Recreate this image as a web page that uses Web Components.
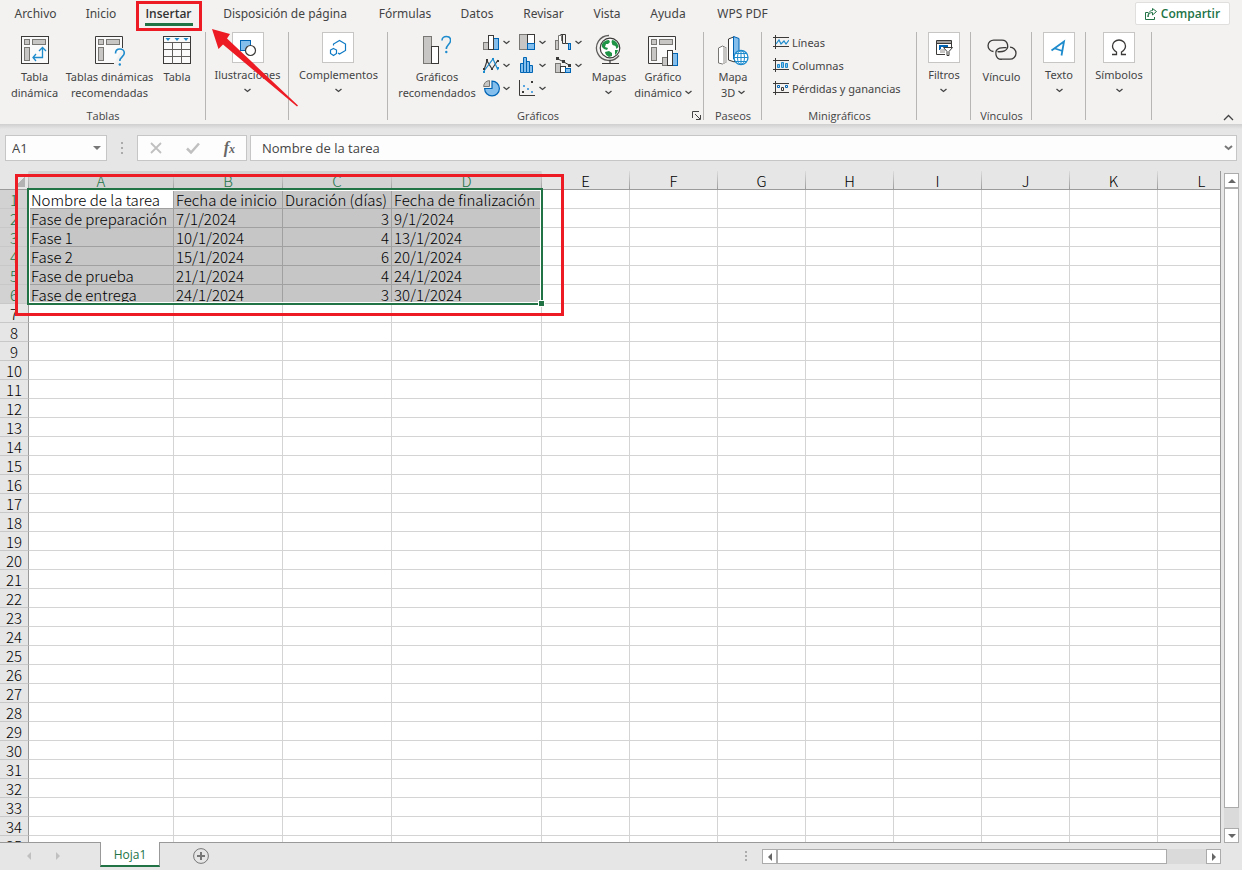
<!DOCTYPE html>
<html lang="es">
<head>
<meta charset="utf-8">
<title>Hoja de cálculo</title>
<style>
  html, body { margin: 0; height: 100%; }
  body { font-family: "Open Sans", "Noto Sans", sans-serif; font-size: 12px; color: #444; background: #e6e6e6; overflow: hidden; }
</style>
</head>
<body>
<spread-app></spread-app>

<script>
const define = (name, html, setup) => customElements.define(name, class extends HTMLElement {
  connectedCallback() {
    if (this.shadowRoot) return;
    const root = this.attachShadow({ mode: 'open' });
    root.innerHTML = typeof html === 'function' ? html(this) : html;
    if (setup) setup(this, root);
  }
});

const G = '#217346';
const bars = 'fill="#c8c6c4" stroke="#797774"';
const icons = {
  pivot: `<svg width="28" height="28" viewBox="0 0 28 28" fill="none"><rect x=".5" y=".5" width="27" height="27" fill="#fafafa" stroke="#3b3a39"/><g ${bars}><rect x="3.5" y="3.5" width="5" height="5"/><rect x="11.5" y="3.5" width="13" height="5"/><rect x="3.5" y="11.5" width="5" height="13"/></g><path d="M12 21.500h9.500V12M15 18l-3 3.500 3 3.500M18 15l3.500-3.500L25 15" stroke="#1e8bcd" stroke-width="1.300"/></svg>`,
  pivotRec: `<svg width="32" height="32" viewBox="-1 -2 32 32" fill="none"><path d="M27.500 12V.5H.5v27H19" fill="#fafafa" stroke="#3b3a39"/><g ${bars}><rect x="3.500" y="3.500" width="5" height="5"/><rect x="11.500" y="3.500" width="13" height="5"/><rect x="3.500" y="11.500" width="5" height="13"/></g><path d="M20.500 17.500c0-3 2-4.500 4.300-4.500 2.500 0 4.500 1.600 4.500 4 0 3.800-4.500 4-4.500 8" stroke="#1e8bcd" stroke-width="1.600"/><circle cx="24.800" cy="28.500" r="1.200" fill="#1e8bcd"/></svg>`,
  table: `<svg width="28" height="28" viewBox="0 0 28 28" fill="none"><rect x=".5" y=".5" width="27" height="27" fill="#fafafa" stroke="#3b3a39"/><path d="M1 6.500h26M1 13.500h26M1 20.500h26M9.500 6v22M18.500 6v22" stroke="#605e5c"/><path d="M2.500 2h5L5 5zM11.500 2h5L14 5zM20.500 2h5L23 5z" fill="#1e8bcd"/></svg>`,
  shapes: `<svg width="18" height="18" viewBox="0 0 18 18"><rect x="1.500" y="1.500" width="10" height="10" fill="#83beec" stroke="#0064b5"/><circle cx="11.500" cy="11.500" r="5" fill="#fff" stroke="#3b3a39" stroke-width="1.200"/></svg>`,
  addins: `<svg width="18" height="18" viewBox="0 0 18 18" fill="none" stroke="#0f7ac4" stroke-width="1.200"><path d="M4.500 6.500V5L10.500 1.500l6 3.500v6.500l-6 3.500-1.500-1"/><path d="M4.500 9.500l3 1.500v3.500l-3 2-3-2V11z"/></svg>`,
  chartRec: `<svg width="28" height="32" viewBox="0 0 28 32" fill="none"><rect x=".5" y="2.500" width="8" height="27" ${bars}/><rect x="8.500" y="12.500" width="7" height="17" fill="#fff" stroke="#3b3a39"/><path d="M19 6.500C19 4 21 2.500 23.300 2.500c2.600 0 4.300 1.600 4.300 4 0 3.700-4.300 4.500-4.300 8.500" stroke="#1e8bcd" stroke-width="1.600"/><circle cx="23.300" cy="18" r="1.200" fill="#1e8bcd"/></svg>`,
  column: `<svg width="17" height="17" viewBox="0 0 17 17"><rect x=".5" y="8.500" width="5" height="7" ${bars}/><rect x="10.500" y="4.500" width="5" height="11" fill="#83beec" stroke="#0064b5"/><rect x="5.500" y="1.500" width="5" height="14" fill="#fff" stroke="#3b3a39"/></svg>`,
  line: `<svg width="17" height="17" viewBox="0 0 17 17" fill="none"><path d="M1 13l3-9 5 8 6-9" stroke="#3b3a39" stroke-width="1.200"/><path d="M1 14l9-12 5 11" stroke="#1e8bcd" stroke-width="1.200"/><path d="M3 2h2v3H3zM0 11h2v2H0zM8 11h2v2H8zM14 3h2v2h-2z" fill="#3b3a39"/><path d="M9 1h2v2H9zM14 10h2v2h-2zM0 14h2v2H0z" fill="#1e8bcd"/></svg>`,
  pie: `<svg width="17" height="17" viewBox="0 0 17 17"><path d="M9 8.500H1.600a7.400 7.400 0 1 0 7.400-7.400z" fill="#83beec" stroke="#0064b5" stroke-width="1.200"/><path d="M7.500 7.500H0V0h7.500z" fill="#f3f2f1"/><path d="M6.500 6.500V.600A6.500 6.500 0 0 0 .600 6.500z" ${bars}/></svg>`,
  tree: `<svg width="17" height="17" viewBox="0 0 17 17"><rect x=".5" y=".5" width="8" height="15" ${bars}/><rect x="8.500" y=".5" width="7" height="9" fill="#fff" stroke="#3b3a39"/><rect x="8.500" y="9.500" width="7" height="6" fill="#83beec" stroke="#0064b5"/></svg>`,
  hist: `<svg width="17" height="17" viewBox="0 0 17 17" fill="#83beec" stroke="#0064b5"><path d="M1.500 6.500h3v9h-3zM4.500 .5h3v15h-3zM7.500 4.500h3v11h-3zM10.500 8.500h3v7h-3z"/></svg>`,
  scatter: `<svg width="17" height="17" viewBox="0 0 17 17"><path d="M.5 0v15.500H16" fill="none" stroke="#3b3a39"/><path d="M12 1h2v2h-2zM3 11h2v2H3z" fill="#3b3a39"/><path d="M4 5h2v2H4zM8 8h2v2H8zM12 11h2v2h-2z" fill="#5aa7e0"/></svg>`,
  waterfall: `<svg width="17" height="17" viewBox="0 0 17 17" fill="none"><rect x=".5" y="6.500" width="3" height="9" fill="#c8c6c4" stroke="#797774"/><path d="M3.500 7V1.500h3V7" fill="#fff" stroke="#797774"/><path d="M5.500 .5h5v9h-3v-9M10.500 9.500h3" stroke="#3b3a39"/><rect x="13.500" y="9.500" width="2" height="6" fill="#83beec" stroke="#0064b5"/></svg>`,
  combo: `<svg width="17" height="17" viewBox="0 0 17 17" fill="none"><rect x=".5" y="6.500" width="5" height="9" ${bars}/><rect x="5.500" y="9.500" width="5" height="6" fill="#fff" stroke="#3b3a39"/><rect x="10.500" y="11.500" width="5" height="4" fill="#83beec" stroke="#0064b5"/><path d="M2 1.500l6 3 7 4" stroke="#3b3a39"/><path d="M1 0h3v3H1zM7 3h3v3H7zM13 7h3v3h-3z" fill="#3b3a39"/></svg>`,
  globe: `<svg width="28" height="32" viewBox="0 0 28 32" fill="none"><circle cx="15" cy="14" r="9.800" fill="#fff" stroke="#3b3a39" stroke-width="1.200"/><path d="M7 10c2-3 4-4 7-4l1 2-2 2-2 0-1 3 3 1-1 2-3-1-2-2zM17 6c3 0 6 3 6.500 7l-2 2-1-3-3-1-1-3zM10 18l4-1 3 2 0 3-3 1c-2-1-4-3-4-5zM20 16l3 0c-.5 2-1.500 4-3 5z" fill="#1f9346"/><path d="M14 1.500a12.500 12.500 0 1 0 10 20" stroke="#605e5c" stroke-width="1.300"/><path d="M15 26v3M7 29.500h17" stroke="#3b3a39" stroke-width="1.200"/></svg>`,
  pivotChart: `<svg width="32" height="32" viewBox="-1 -2 32 32" fill="none"><path d="M27.500 14V.5H.5v27H14" fill="#fafafa" stroke="#3b3a39"/><g ${bars}><rect x="3.500" y="3.500" width="5" height="5"/><rect x="11.500" y="3.500" width="13" height="5"/><rect x="3.500" y="11.500" width="5" height="13"/><rect x="14.500" y="21.500" width="5" height="8"/></g><rect x="24.500" y="17.500" width="5" height="12" fill="#83beec" stroke="#0064b5"/><rect x="19.500" y="14.500" width="5" height="15" fill="#fff" stroke="#3b3a39"/></svg>`,
  map3d: `<svg width="32" height="32" viewBox="0 0 32 32" fill="none"><path d="M1.500 14l4-2 4 2v14l-4 2-4-1z" fill="#fff" stroke="#797774"/><path d="M6 13l4 1v14l-4 2z" fill="#c8c6c4"/><path d="M11.500 5l5-2h1v25l-6-2z" fill="#fff" stroke="#3b3a39"/><path d="M16.500 2.500l5.500 2V20l-5.500 5z" fill="#83beec" stroke="#0064b5"/><circle cx="24" cy="23.500" r="7" fill="#fff" stroke="#1e8bcd" stroke-width="1.300"/><path d="M24 16.500v14M17 23.500h14M18.500 19.500h11M18.500 27.500h11" stroke="#1e8bcd"/><ellipse cx="24" cy="23.500" rx="3.500" ry="7" stroke="#1e8bcd"/></svg>`,
  spLine: `<svg width="16" height="15" viewBox="0 0 16 15" fill="none"><path d="M0 2.500h16M0 11.500h16M2.500 0v14" stroke="#3b3a39"/><path d="M3 9l3-4 2 4 3-3 2 3 3-4" stroke="#1e8bcd" stroke-width="1.200"/></svg>`,
  spCol: `<svg width="16" height="15" viewBox="0 0 16 15" fill="none"><path d="M0 2.500h16M0 11.500h16M2.500 0v14" stroke="#3b3a39"/><path d="M4.500 6.500h2v3h-2zM8.500 4.500h2v5h-2zM12.500 5.500h2v4h-2z" fill="#83beec" stroke="#1e8bcd"/></svg>`,
  spWin: `<svg width="16" height="15" viewBox="0 0 16 15" fill="none"><path d="M0 2.500h16M0 11.500h16M2.500 0v14" stroke="#3b3a39"/><path d="M4.500 4.500h2v2h-2zM12.500 4.500h2v2h-2z" stroke="#0064b5"/><path d="M8.500 6.500h2v3h-2z" stroke="#3b3a39"/></svg>`,
  filter: `<svg width="18" height="18" viewBox="0 0 18 18" fill="none"><path d="M16.500 8V1.500h-15v14H10" stroke="#3b3a39"/><path d="M2 2h14v2H2z" fill="#a19f9d"/><path d="M1 4.500h16" stroke="#3b3a39"/><path d="M13 7H5v4" stroke="#0064b5" stroke-width="2"/><path d="M5 10h5v4H5z" fill="#c8c6c4"/><path d="M8.500 8.500h9l-3.500 4v4h-2v-4z" fill="#fff" stroke="#3b3a39"/></svg>`,
  link: `<svg width="30" height="32" viewBox="0 0 30 32" fill="none" stroke="#3b3a39" stroke-width="1.300"><path d="M6.500 17.500a5.700 5.700 0 0 1 .5-11.400h8a5.700 5.700 0 0 1 2.500 10.800c-2.500 1.200-5 .8-7 .8"/><path d="M23 13.200a5.700 5.700 0 0 1 0 12h-8a5.700 5.700 0 0 1-2.500-11c2.500-1 5-.6 7-.6"/></svg>`,
  text: `<svg width="18" height="18" viewBox="0 0 18 18" fill="none" stroke="#1e8bcd" stroke-width="1.800"><path d="M1.500 11.500L14 2.500l-2.500 14M5 9.500l7.500 2.500"/></svg>`,
  omega: `<svg width="18" height="18" viewBox="0 0 18 18" fill="none" stroke="#3b3a39" stroke-width="1.300"><path d="M2 15.500h4.500V13C4 11.500 2.500 9.500 2.500 7a6.500 6 0 0 1 13 0c0 2.500-1.500 4.500-4 6v2.500H16"/></svg>`,
};

define('ui-icon', el => `<style>:host{display:inline-flex;flex:none}svg{display:block}</style>${icons[el.getAttribute('name')]}`);

define('ui-chevron', `<style>:host{display:inline-block;line-height:0;vertical-align:2px}svg{display:block}</style>
<svg width="7" height="5" viewBox="0 0 7 5" fill="none" stroke="#444" stroke-width="1.300"><path d="M.5 1l3 2.500 3-2.500"/></svg>`);

/* Large ribbon button: icon above a one or two line label */
define('ribbon-button', el => `<style>
  :host{display:block;flex:none;box-sizing:border-box}
  button{all:unset;box-sizing:border-box;display:flex;flex-direction:column;align-items:center;width:100%;padding-top:2px}
  .icon{display:flex;align-items:center;justify-content:center;height:32px;margin-bottom:3px}
  .label{font-family:"Noto Sans",sans-serif;font-size:11px;line-height:16px;text-align:center;white-space:nowrap}
  :host([framed]) button{padding-top:0}
  :host([framed]) .icon{box-sizing:border-box;width:32px;height:31px;margin-bottom:4px;background:#fff;border:1px solid #c8c6c4}
</style><button type="button"><span class="icon"><ui-icon name="${el.getAttribute('icon')}"></ui-icon></span><span class="label"><slot></slot></span></button>`);

/* Small ribbon button: icon with a chevron or text to its right */
define('ribbon-small', el => `<style>
  :host{display:block}
  button{all:unset;box-sizing:border-box;display:flex;align-items:center;gap:3px;height:23px;padding-bottom:2px;white-space:nowrap;font-family:"Noto Sans",sans-serif;font-size:11px;line-height:16px}
</style><button type="button" aria-label="${el.getAttribute('label') || el.textContent}"><ui-icon name="${el.getAttribute('icon')}"></ui-icon><slot></slot></button>`);

define('ribbon-group', el => `<style>
  :host{display:flex;flex-direction:column;position:relative;box-sizing:border-box;height:92px}
  :host::after{content:"";position:absolute;right:0;top:0;bottom:4px;width:1px;background:#b8b6b4}
  .body{display:flex;flex:1;min-height:0}
  :host([center]) .body{justify-content:center}
  .name{height:16px;line-height:16px;font-size:11px;text-align:center}
</style><div class="body"><slot></slot></div><div class="name">${el.getAttribute('label') || ''}</div><slot name="extra"></slot>`);

define('ribbon-tabs', `<style>
  :host{display:flex;align-items:flex-start;height:32px}
  nav{display:grid;grid-template-columns:71px 60px 75px 158px 82px 62px 71px 56px 66px 83px;font-family:"Noto Sans",sans-serif;font-size:12px;line-height:27px;text-align:center;flex:none}
  a{color:#444;text-decoration:none;white-space:nowrap}
  a[aria-current]{position:relative;color:#333;font-family:"Open Sans",sans-serif;font-weight:600}
  a[aria-current]::after{content:"";position:absolute;left:14px;right:13px;top:23px;height:3px;background:${G}}
  a[aria-current]::before{content:"";position:absolute;left:5px;right:4px;top:1px;height:24px;border:3px solid #ed1c24}
  .share{all:unset;box-sizing:border-box;margin:2px 12px 0 auto;height:23px;width:95px;display:flex;align-items:center;justify-content:center;gap:4px;background:#fff;border:1px solid #e1dfdd;border-radius:2px;color:${G};font-weight:600;font-size:12px}
</style>
<nav><a href="#">Archivo</a><a href="#">Inicio</a><a href="#" aria-current="page">Insertar</a><a href="#">Disposición de página</a><a href="#">Fórmulas</a><a href="#">Datos</a><a href="#">Revisar</a><a href="#">Vista</a><a href="#">Ayuda</a><a href="#">WPS PDF</a></nav>
<button class="share" type="button"><svg width="12" height="12" viewBox="0 0 12 12" fill="none" stroke="${G}"><path d="M3 4.500H.5v7h9V9M3 9c0-3 2-4.500 4.500-4.500V7L11.500 3.500 7.500.5v2C4.500 2.500 3 5 3 9z"/></svg>Compartir</button>`);

define('ribbon-bar', `<style>
  :host{display:block;position:relative;background:#f3f2f1;flex:none}
  .groups{display:flex}
  ribbon-group{flex:none}
  .grid{display:grid;grid-template-columns:repeat(3,36px);grid-auto-rows:23px;align-content:start;margin-left:6px}
  .list{display:flex;flex-direction:column;margin-left:11px}
  .launch{all:unset;position:absolute;right:3px;bottom:4px;width:9px;height:9px;line-height:0}
  .collapse{all:unset;position:absolute;right:8px;bottom:3px;width:11px;height:7px;line-height:0}
</style>
<ribbon-tabs></ribbon-tabs>
<div class="groups">
  <ribbon-group label="Tablas" style="width:206px">
    <ribbon-button icon="pivot" style="width:59px;margin-left:5px">Tabla<br>dinámica</ribbon-button>
    <ribbon-button icon="pivotRec" style="width:91px">Tablas dinámicas<br>recomendadas</ribbon-button>
    <ribbon-button icon="table" style="width:44px">Tabla</ribbon-button>
  </ribbon-group>
  <ribbon-group center style="width:83px"><ribbon-button framed icon="shapes">Ilustraciones<br><ui-chevron></ui-chevron></ribbon-button></ribbon-group>
  <ribbon-group center style="width:99px"><ribbon-button framed icon="addins">Complementos<br><ui-chevron></ui-chevron></ribbon-button></ribbon-group>
  <ribbon-group label="Gráficos" style="width:316px;padding-right:16px">
    <ribbon-button icon="chartRec" style="width:80px;margin-left:9px">Gráficos<br>recomendados</ribbon-button>
    <div class="grid">
      <ribbon-small icon="column" label="Columnas"><ui-chevron></ui-chevron></ribbon-small>
      <ribbon-small icon="tree" label="Jerarquía"><ui-chevron></ui-chevron></ribbon-small>
      <ribbon-small icon="waterfall" label="Cascada"><ui-chevron></ui-chevron></ribbon-small>
      <ribbon-small icon="line" label="Líneas"><ui-chevron></ui-chevron></ribbon-small>
      <ribbon-small icon="hist" label="Estadística"><ui-chevron></ui-chevron></ribbon-small>
      <ribbon-small icon="combo" label="Combinado"><ui-chevron></ui-chevron></ribbon-small>
      <ribbon-small icon="pie" label="Circular"><ui-chevron></ui-chevron></ribbon-small>
      <ribbon-small icon="scatter" label="Dispersión"><ui-chevron></ui-chevron></ribbon-small>
    </div>
    <ribbon-button icon="globe" style="width:36px">Mapas<br><ui-chevron></ui-chevron></ribbon-button>
    <ribbon-button icon="pivotChart" style="width:66px;margin-left:3px">Gráfico<br>dinámico <ui-chevron></ui-chevron></ribbon-button>
    <button slot="extra" class="launch" type="button" aria-label="Ver todos los gráficos"><svg width="9" height="9" viewBox="0 0 9 9" fill="none" stroke="#444"><path d="M.5 7V.5H7M3 3l5 5M8.500 4v4.500H4"/></svg></button>
  </ribbon-group>
  <ribbon-group center label="Paseos" style="width:58px"><ribbon-button icon="map3d">Mapa<br>3D <ui-chevron></ui-chevron></ribbon-button></ribbon-group>
  <ribbon-group label="Minigráficos" style="width:155px"><div class="list">
    <ribbon-small icon="spLine">Líneas</ribbon-small>
    <ribbon-small icon="spCol">Columnas</ribbon-small>
    <ribbon-small icon="spWin">Pérdidas y ganancias</ribbon-small></div>
  </ribbon-group>
  <ribbon-group center style="width:54px"><ribbon-button framed icon="filter">Filtros<br><ui-chevron></ui-chevron></ribbon-button></ribbon-group>
  <ribbon-group center label="Vínculos" style="width:61px"><ribbon-button icon="link">Vínculo</ribbon-button></ribbon-group>
  <ribbon-group center style="width:54px"><ribbon-button framed icon="text">Texto<br><ui-chevron></ui-chevron></ribbon-button></ribbon-group>
  <ribbon-group center style="width:66px"><ribbon-button framed icon="omega">Símbolos<br><ui-chevron></ui-chevron></ribbon-button></ribbon-group>
</div>
<button class="collapse" type="button" aria-label="Contraer la cinta"><svg width="11" height="7" viewBox="0 0 11 7" fill="none" stroke="#444" stroke-width="1.300"><path d="M1 6l4.500-4.500L10 6"/></svg></button>`);

define('formula-bar', `<style>
  :host{display:flex;flex:none;padding:11px 5px 10px;background:linear-gradient(#cfcfcf,#e6e6e6 5px)}
  .box{box-sizing:border-box;height:26px;background:#fdfdfd;border:1px solid #c6c6c6;display:flex;align-items:center}
  input{all:unset;box-sizing:border-box;flex:1;min-width:0;font-size:13px;line-height:24px;color:#444}
  .name{width:102px;padding:0 5px 0 6px}
  .dots{width:30px;display:flex;flex-direction:column;align-items:center;justify-content:center;gap:3px}
  .dots i{width:2px;height:2px;background:#ababab}
  .tools{width:110px;margin-right:3px;justify-content:space-between;padding:0 11px 0 12px}
  .tools button{all:unset;line-height:0}
  .tools .fx{font:italic 700 16px/20px "Liberation Serif",serif;color:#666}
  .fx small{font-size:12px}
  .value{flex:1;padding:0 3px 0 11px}
</style>
<div class="box name"><input aria-label="Cuadro de nombres" value="A1"><svg width="8" height="4" viewBox="0 0 8 4"><path d="M0 0h8L4 4z" fill="#777"/></svg></div>
<div class="dots"><i></i><i></i><i></i></div>
<div class="box tools">
  <button type="button" aria-label="Cancelar"><svg width="12" height="12" viewBox="0 0 12 12" stroke="#c0c0c0" stroke-width="1.800"><path d="M1 1l10 10M11 1L1 11"/></svg></button>
  <button type="button" aria-label="Introducir"><svg width="14" height="12" viewBox="0 0 14 12" fill="none" stroke="#c0c0c0" stroke-width="2.500"><path d="M1 6.500l4 4L13 1.500"/></svg></button>
  <button type="button" class="fx" aria-label="Insertar función">f<small>x</small></button>
</div>
<div class="box value"><input aria-label="Barra de fórmulas" value="Nombre de la tarea"><svg width="9" height="6" viewBox="0 0 9 6" fill="none" stroke="#777" stroke-width="2"><path d="M1 1l3.500 3L8 1"/></svg></div>`);

define('sheet-grid', `<style>
  :host{display:block;position:relative;overflow:hidden;box-sizing:border-box}
  table{border-collapse:separate;border-spacing:0;table-layout:fixed;width:1246px;font:300 15px/20px "Noto Sans CJK SC","Noto Sans CJK JP",sans-serif;color:#000}
  th,td{box-sizing:border-box;height:19px;padding:0 2px;white-space:nowrap}
  td{background:#fff;border-right:1px solid #d4d4d4;border-bottom:1px solid #d4d4d4;text-align:left}
  td>div,th>div{height:18px}
  th{font-weight:300;background:#e6e6e6;text-align:center;padding:0}
  thead th{border-bottom:1px solid #999;border-right:1px solid;border-image:linear-gradient(#e0e0e0,#999) 1}
  tbody th{border-right:1px solid #999;border-bottom:1px solid #c8c8c8}
  th.on{background:#d2d2d2;color:${G}}
  td.sel{background:#c6c6c6;border-color:#a0a0a0}
  td.active{background:#fff}
  td.num{text-align:right}
  th.corner{background:linear-gradient(135deg,transparent 0 50%,#b2b2b2 50%) 15px 6px/10px 10px no-repeat #e6e6e6}
  .range{position:absolute;left:27px;top:17px;width:512px;height:113px;border:2px solid ${G};box-shadow:inset 0 0 0 1px #fff}
  .range::after{content:"";position:absolute;right:-4px;bottom:-4px;width:5px;height:5px;background:${G};border:1px solid #fff}
</style><table><colgroup></colgroup><thead></thead><tbody></tbody></table><div class="range"></div>`, (el, root) => {
  const widths = [29, 145, 109, 109, 150, 88, 88, 88, 88, 88, 88, 88, 88];
  const data = [
    ['Nombre de la tarea', 'Fecha de inicio', 'Duración (días)', 'Fecha de finalización'],
    ['Fase de preparación', '7/1/2024', '3', '9/1/2024'],
    ['Fase 1', '10/1/2024', '4', '13/1/2024'],
    ['Fase 2', '15/1/2024', '6', '20/1/2024'],
    ['Fase de prueba', '21/1/2024', '4', '24/1/2024'],
    ['Fase de entrega', '24/1/2024', '3', '30/1/2024'],
  ];
  root.querySelector('colgroup').innerHTML = widths.map(w => `<col style="width:${w}px">`).join('');
  root.querySelector('thead').innerHTML = '<tr><th class="corner"></th>' +
    [...'ABCDEFGHIJKL'].map((c, i) => `<th scope="col" class="${i < 4 ? 'on' : ''}"><div>${c}</div></th>`).join('') + '</tr>';
  let rows = '';
  for (let r = 0; r < 35; r++) {
    rows += `<tr><th scope="row" class="${r < 6 ? 'on' : ''}"><div>${r + 1}</div></th>`;
    for (let c = 0; c < 12; c++) {
      const v = data[r] && data[r][c] || '';
      const cls = v ? 'sel' + (r + c === 0 ? ' active' : '') + (r && c === 2 ? ' num' : '') : '';
      rows += `<td class="${cls}">${v && `<div>${v}</div>`}</td>`;
    }
    rows += '</tr>';
  }
  root.querySelector('tbody').innerHTML = rows;
});

define('scroll-bar', el => {
  const v = el.hasAttribute('vertical');
  const tri = v ? ['M4 0l4 4H0z', 'M0 0h8L4 4z'] : ['M4 0v8L0 4z', 'M0 0v8l4-4z'];
  const size = v ? 'width="8" height="4"' : 'width="4" height="8"';
  return `<style>
  :host{display:flex;flex-direction:${v ? 'column' : 'row'};background:#dadada}
  button,.thumb{all:unset;box-sizing:border-box;background:#fff;border:1px solid #ababab;min-width:15px;min-height:15px}
  button{flex:none;width:15px;height:15px;display:flex;align-items:center;justify-content:center}
  .thumb{flex-grow:var(--thumb)}
  .rest{flex-grow:var(--rest)}
</style><button type="button" aria-label="Atrás"><svg ${size}><path d="${tri[0]}" fill="#666"/></svg></button><div class="thumb"></div><div class="rest"></div><button type="button" aria-label="Adelante"><svg ${size}><path d="${tri[1]}" fill="#666"/></svg></button>`;
});

define('sheet-tabs', `<style>
  :host{display:flex;align-items:flex-start;height:27px;flex:none}
  .nav{box-sizing:border-box;width:100px;height:26px;display:flex;align-items:center;gap:25px;padding-left:27px}
  button{all:unset;line-height:0}
  a{position:relative;box-sizing:border-box;width:60px;height:25px;margin-top:-1px;background:#fff;border:solid #999;border-width:0 1px;border-bottom:2px solid ${G};color:${G};text-align:center;text-decoration:none;font-size:12px;line-height:26px}
  .add{margin:5px 0 0 33px}
  .dots{margin:8px 15px 0 auto;display:flex;flex-direction:column;gap:2px}
  .dots i{width:2px;height:2px;background:#ababab}
  scroll-bar{flex:0 1 459px;height:15px;margin:6px 21px 0 0}
</style>
<div class="nav"><button type="button" aria-label="Hoja anterior"><svg width="4" height="8"><path d="M4 0v8L0 4z" fill="#c0c0c0"/></svg></button><button type="button" aria-label="Hoja siguiente"><svg width="4" height="8"><path d="M0 0v8l4-4z" fill="#c0c0c0"/></svg></button></div>
<a href="#">Hoja1</a>
<button type="button" class="add" aria-label="Hoja nueva"><svg width="16" height="16" viewBox="0 0 16 16" fill="none" stroke="#777"><circle cx="8" cy="8" r="7.400"/><path d="M4 8h8M8 4v8" stroke-width="2"/></svg></button>
<div class="dots"><i></i><i></i><i></i></div>
<scroll-bar style="--thumb:390;--rest:39"></scroll-bar>`);

define('spread-app', `<style>
  :host{display:flex;flex-direction:column;height:100vh;position:relative;overflow:hidden;background:#e6e6e6}
  .main{flex:1;min-height:0;display:flex}
  sheet-grid{flex:1;min-width:0;border:solid #999;border-width:0 1px 1px 0}
  .side{display:flex;padding:2px 3px 0}
  .mark{position:absolute;left:15px;top:174px;width:543px;height:136px;border:3px solid #ed1c24}
  .arrow{position:absolute;left:208px;top:24px}
</style>
<ribbon-bar></ribbon-bar>
<formula-bar></formula-bar>
<div class="main"><sheet-grid></sheet-grid><div class="side"><scroll-bar vertical style="--thumb:622;--rest:20"></scroll-bar></div></div>
<sheet-tabs></sheet-tabs>
<div class="mark"></div>
<svg class="arrow" width="94" height="86" viewBox="0 0 94 86"><path d="M4 5l18 5-3 4.500 71 67-1 1-74-62-4.500 4.500z" fill="#ed1c24"/></svg>`);
</script>
</body>
</html>
